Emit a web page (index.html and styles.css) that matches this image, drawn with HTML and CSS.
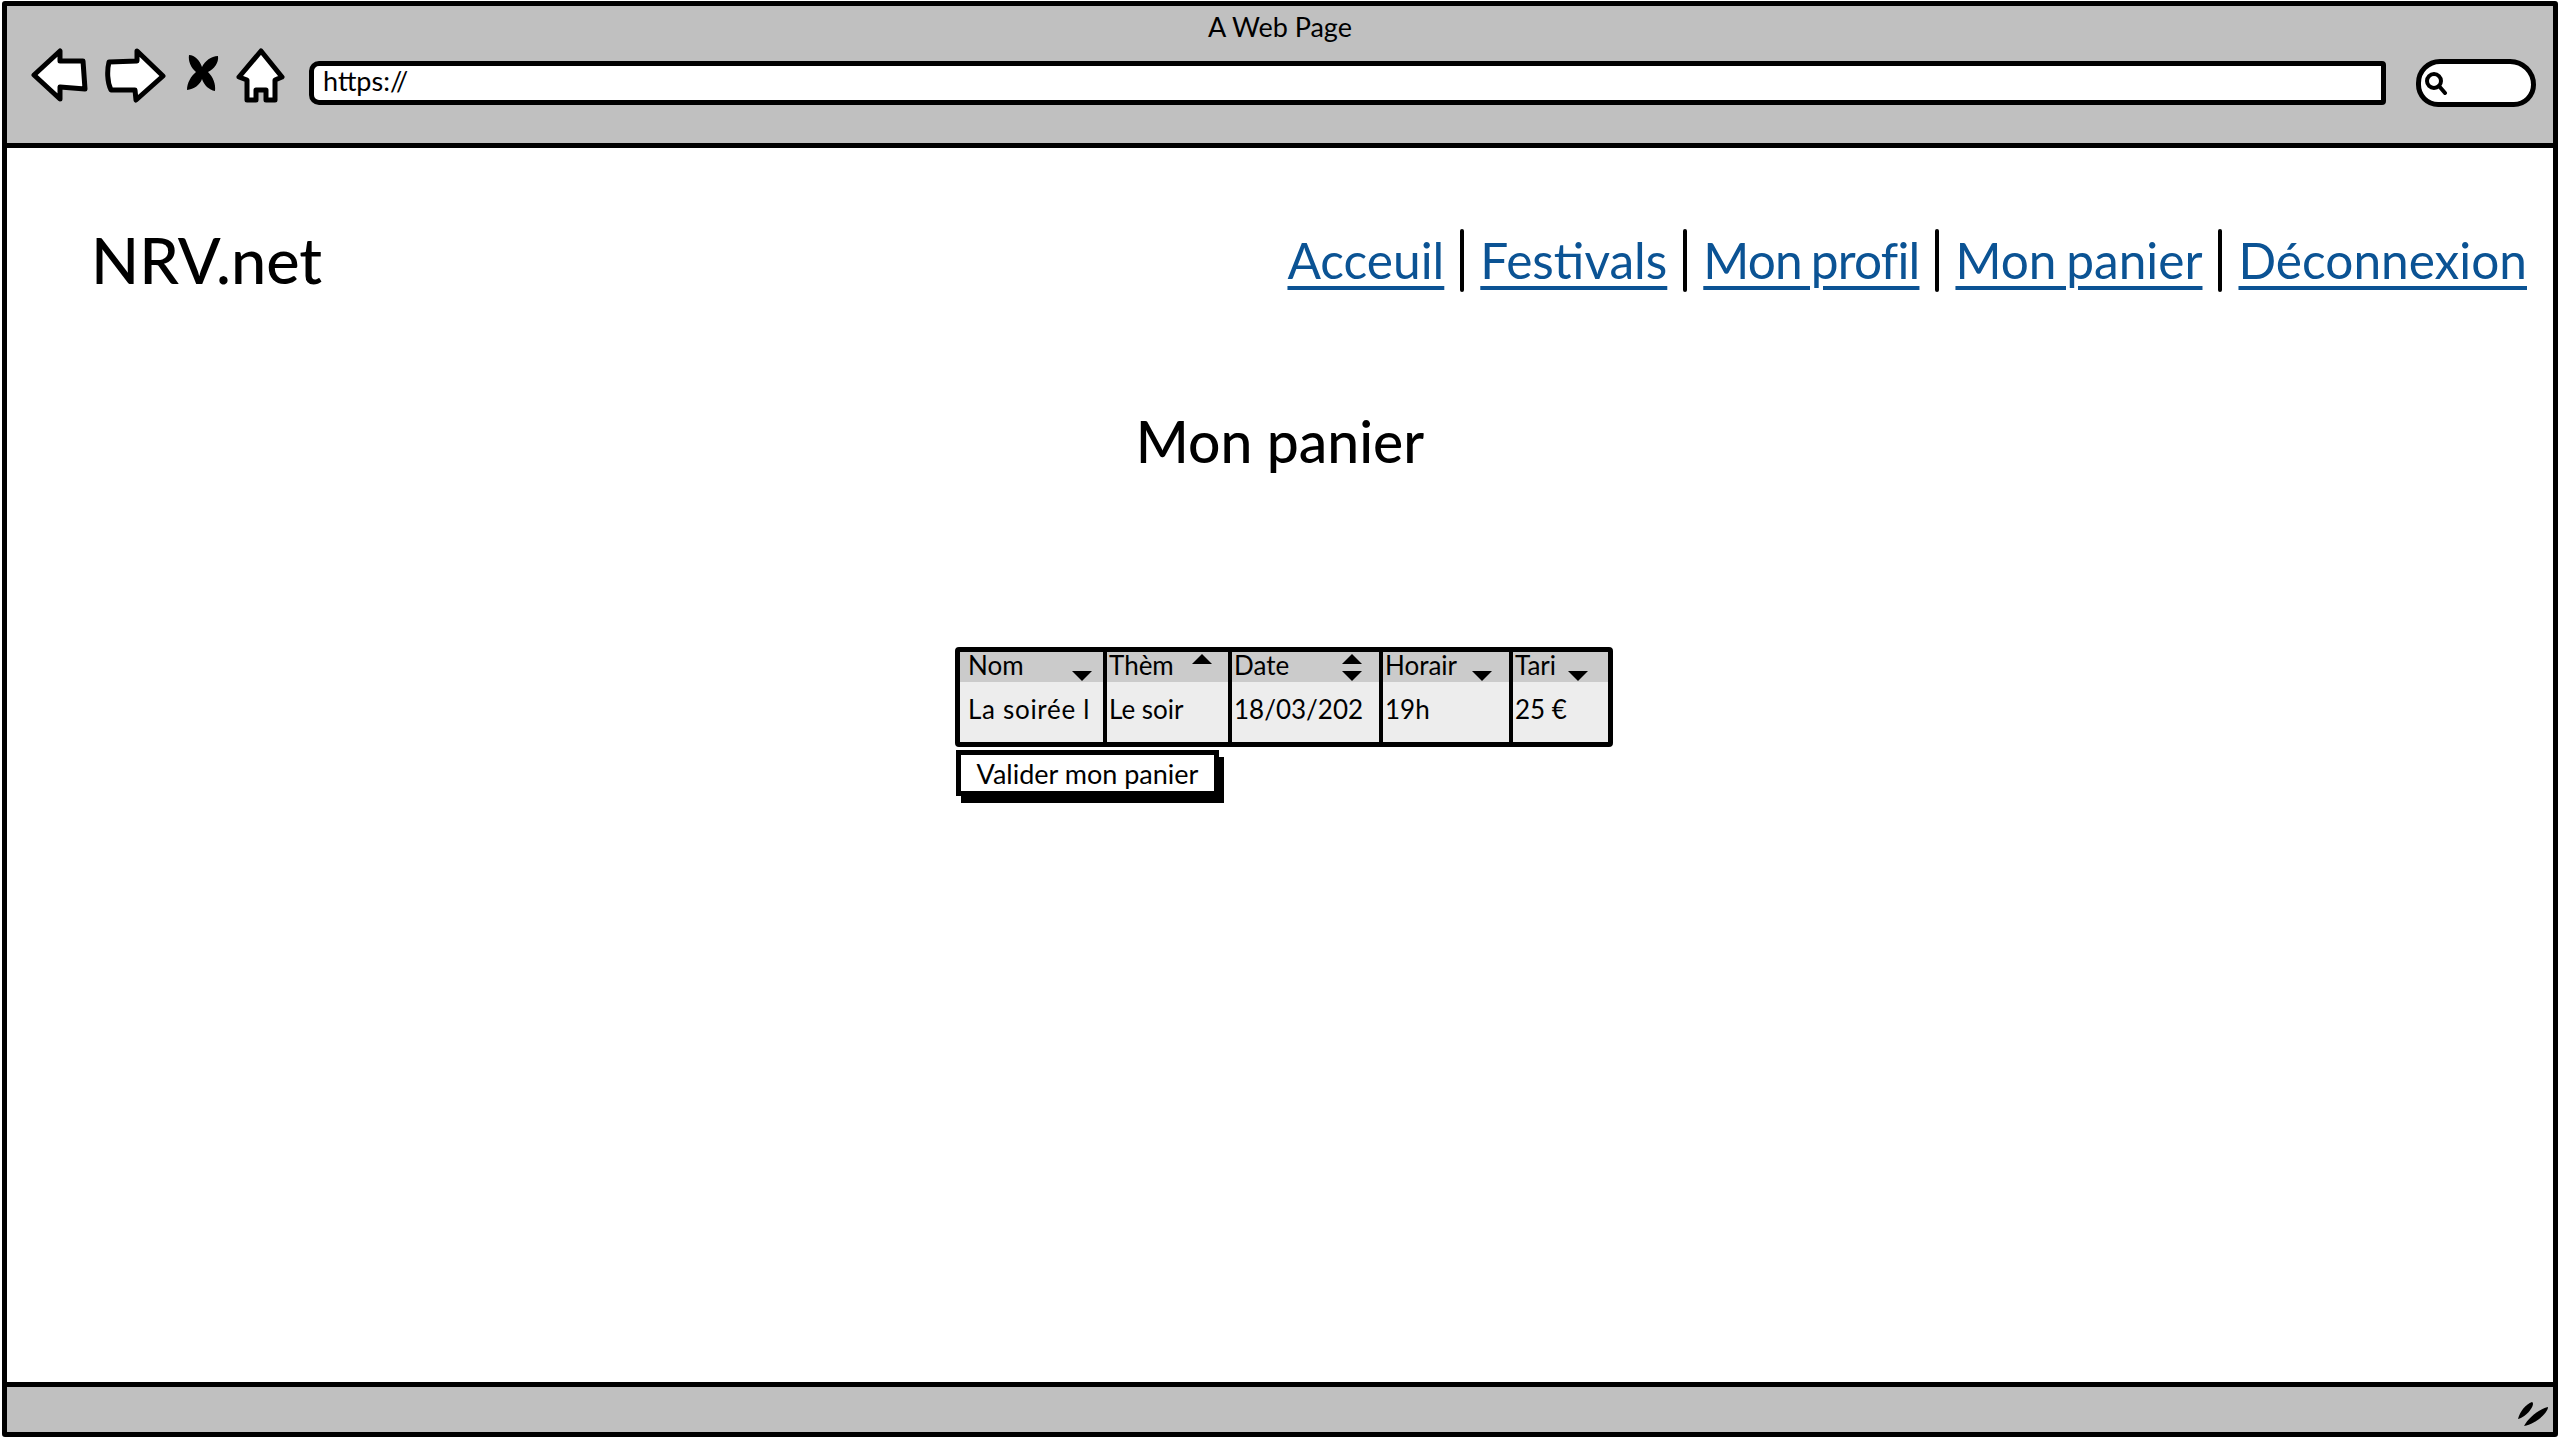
FILE: index.html
```html
<!DOCTYPE html>
<html lang="fr">
<head>
    <meta charset="UTF-8">
    <title>A Web Page</title>
    <link rel="stylesheet" href="styles.css">
</head>
<body>
    <div class="window">
        <div class="toolbar">
            <div class="window-title">A Web Page</div>
            <div class="toolbar-row">
                <svg class="icon icon-back" viewBox="0 0 62 56"><path d="M3 27 29 3V13H52L54 41 29 39V51Z"/></svg>
                <svg class="icon icon-forward" viewBox="0 0 62 56"><path d="M5 14 33 13V3L59 28 32 52 31 42 7 42C3 34 3 22 5 14Z"/></svg>
                <svg class="icon icon-stop" viewBox="0 0 36 38"><path class="solid" d="M3 1C9 1 14 7 16 13 19 7 25 2 32 2 33 9 28 15 22 18 27 23 30 30 29 37 23 36 18 31 16 25 14 31 8 35 1 36 1 29 5 22 10 18 5 14 2 7 3 1Z"/></svg>
                <svg class="icon icon-home" viewBox="0 0 50 56"><path d="M25 3 46 29 39 32V52H30V42H20V52H11V32L3 29Z"/></svg>
                <div class="address">https://</div>
                <div class="search">
                    <svg class="search-icon" viewBox="0 0 24 24"><circle cx="10" cy="10" r="7"/><path d="M15 15 21 22"/></svg>
                </div>
            </div>
        </div>

        <div class="content">
            <header class="site-header">
                <div class="logo">NRV.net</div>
                <nav class="nav">
                    <a href="#">Acceuil</a>
                    <span class="sep"></span>
                    <a href="#">Festivals</a>
                    <span class="sep"></span>
                    <a href="#" class="nav-tight">Mon profil</a>
                    <span class="sep"></span>
                    <a href="#">Mon panier</a>
                    <span class="sep"></span>
                    <a href="#">Déconnexion</a>
                </nav>
            </header>

            <h1 class="page-title">Mon panier</h1>

            <div class="cart">
                <table class="cart-table">
                    <colgroup>
                        <col class="col-nom"><col class="col-theme"><col class="col-date"><col class="col-horaire"><col class="col-tarif">
                    </colgroup>
                    <thead>
                        <tr>
                            <th class="pad-nom"><div class="th-in">Nom<svg class="sort" viewBox="0 0 20 30"><path d="M0 19H20L10 29Z"/></svg></div></th>
                            <th class="pad-theme"><div class="th-in">Thèm<svg class="sort" viewBox="0 0 20 30"><path d="M10 2 20 12H0Z"/></svg></div></th>
                            <th class="pad-date"><div class="th-in">Date<svg class="sort" viewBox="0 0 20 30"><path d="M10 2 20 12H0Z"/><path d="M0 19H20L10 29Z"/></svg></div></th>
                            <th class="pad-horaire"><div class="th-in">Horair<svg class="sort" viewBox="0 0 20 30"><path d="M0 19H20L10 29Z"/></svg></div></th>
                            <th class="pad-tarif"><div class="th-in">Tari<svg class="sort" viewBox="0 0 20 30"><path d="M0 19H20L10 29Z"/></svg></div></th>
                        </tr>
                    </thead>
                    <tbody>
                        <tr>
                            <td class="pad-nom">La soirée l</td>
                            <td>Le soir</td>
                            <td>18/03/202</td>
                            <td>19h</td>
                            <td>25 €</td>
                        </tr>
                    </tbody>
                </table>
                <button class="btn">Valider mon panier</button>
            </div>
        </div>

        <div class="statusbar">
            <svg class="grip" viewBox="0 0 32 26"><path d="M1 18C3 10 9 3 15 1 19 3 10 16 1 18Z"/><path d="M7 25C11 17 22 8 31 6 31 12 18 23 7 25Z"/></svg>
        </div>
    </div>
</body>
</html>
```

FILE: styles.css
```css
html, body {
    margin: 0;
    height: 100%;
}
body {
    font-family: Lato, "Noto Sans", sans-serif;
    color: #000;
    background-color: #fff;
}
.window {
    box-sizing: border-box;
    width: 2556px;
    height: 1436px;
    margin: 1px 2px;
    border: 5px solid #000;
    border-radius: 3px;
    display: flex;
    flex-direction: column;
}

/* browser chrome */
.toolbar {
    box-sizing: border-box;
    height: 142px;
    background-color: #c0c0c0;
    border-bottom: 5px solid #000;
}
.window-title {
    text-align: center;
    font-size: 27px;
    line-height: 30px;
    padding-top: 6px;
}
.toolbar-row {
    display: flex;
    align-items: center;
    height: 62px;
    padding-left: 24px;
    margin-top: 3px;
}
.icon {
    fill: #fff;
    stroke: #000;
    stroke-width: 5;
    stroke-linejoin: round;
    flex: none;
}
.icon .solid {
    fill: #000;
    stroke: none;
}
.icon-back { width: 62px; height: 56px; }
.icon-forward { width: 62px; height: 56px; margin-left: 11px; }
.icon-stop { width: 36px; height: 38px; margin-left: 20px; margin-top: -6px; }
.icon-home { width: 50px; height: 56px; margin-left: 14px; }
.address {
    box-sizing: border-box;
    width: 2077px;
    height: 44px;
    margin-left: 23px;
    margin-top: 13px;
    padding-left: 9px;
    background-color: #fff;
    border: 5px solid #000;
    border-radius: 10px 4px 4px 10px;
    font-size: 27px;
    line-height: 30px;
}
.search {
    box-sizing: border-box;
    width: 120px;
    height: 48px;
    margin-left: 30px;
    margin-top: 13px;
    padding-left: 3px;
    display: flex;
    align-items: center;
    background-color: #fff;
    border: 5px solid #000;
    border-radius: 26px 28px 24px 24px;
}
.search-icon {
    width: 24px;
    height: 24px;
    fill: none;
    stroke: #000;
    stroke-width: 4;
    stroke-linecap: round;
}

/* page */
.content {
    flex: 1;
    min-height: 0;
}
.site-header {
    display: flex;
    justify-content: space-between;
    align-items: center;
    height: 168px;
    padding: 28px 26px 0 84px;
}
.logo {
    font-size: 63px;
    line-height: 70px;
    font-weight: 500;
}
.nav {
    display: flex;
    align-items: center;
    gap: 16px;
    font-size: 49.6px;
    word-spacing: -3px;
}
.nav a {
    color: #0b5394;
    text-decoration-thickness: 4px;
    text-underline-offset: 7px;
}
.nav a.nav-tight {
    font-variant-ligatures: none;
    letter-spacing: -0.8px;
}
.sep {
    width: 4px;
    height: 63px;
    background-color: #000;
    border-radius: 2px;
}
.page-title {
    margin: 0;
    padding-top: 62px;
    text-align: center;
    font-size: 57px;
    line-height: 70px;
    font-weight: 500;
}
.cart {
    width: 660px;
    margin: 171px 0 0 948px;
}
.cart-table {
    box-sizing: border-box;
    width: 658px;
    height: 100px;
    table-layout: fixed;
    border-collapse: separate;
    border-spacing: 0;
    border: 5px solid #000;
    border-radius: 4px;
    font-size: 26px;
}
.col-nom { width: 143px; }
.col-theme { width: 125px; }
.col-date { width: 151px; }
.col-horaire { width: 130px; }
.col-tarif { width: 99px; }
.cart-table th,
.cart-table td {
    padding: 0 0 0 2px;
    border-left: 4px solid #000;
    white-space: nowrap;
    text-align: left;
    font-weight: 400;
}
.cart-table th {
    height: 30px;
    background-color: #cbcbcb;
}
.cart-table td {
    background-color: #ededed;
    padding-bottom: 6px;
}
.cart-table th:first-child,
.cart-table td:first-child {
    border-left: none;
    padding-left: 8px;
}
.cart-table td.pad-nom {
    letter-spacing: 0.7px;
}
.th-in {
    display: flex;
    justify-content: space-between;
    align-items: flex-start;
    height: 30px;
    line-height: 26px;
}
.sort {
    width: 20px;
    height: 30px;
    flex: none;
}
.pad-nom .th-in { padding-right: 11px; }
.pad-theme .th-in { padding-right: 16px; }
.pad-date .th-in { padding-right: 17px; }
.pad-horaire .th-in { padding-right: 17px; }
.pad-tarif .th-in { padding-right: 20px; }
.btn {
    display: block;
    box-sizing: border-box;
    width: 263px;
    height: 46px;
    margin: 3px 0 0 1px;
    padding: 0;
    background-color: #fff;
    border: 5px solid #000;
    box-shadow: 5px 7px 0 #000;
    font-family: inherit;
    font-size: 27px;
    color: #000;
}

/* bottom bar */
.statusbar {
    box-sizing: border-box;
    height: 50px;
    background-color: #c0c0c0;
    border-top: 5px solid #000;
    display: flex;
    justify-content: flex-end;
    align-items: flex-end;
    padding: 0 4px 5px 0;
}
.grip {
    width: 32px;
    height: 26px;
}
```
